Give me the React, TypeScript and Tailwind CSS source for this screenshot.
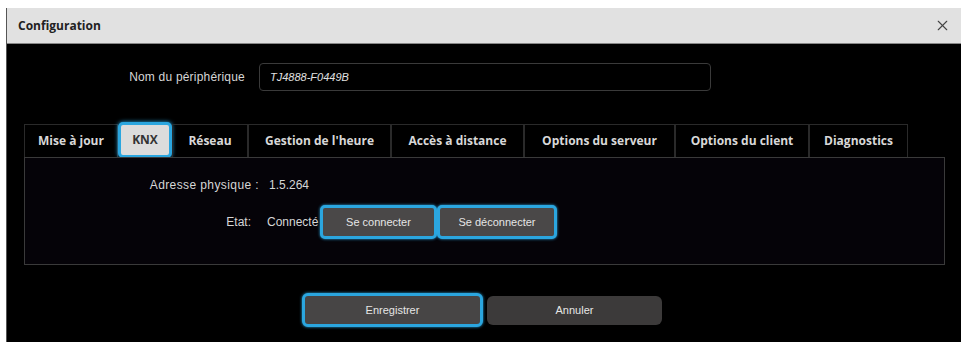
import { X } from "lucide-react";

const tabs = [
  { label: "Mise à jour", w: "w-[94px]" },
  { label: "KNX", w: "w-[54px]", active: true },
  { label: "Réseau", w: "w-[76px]" },
  { label: "Gestion de l'heure", w: "w-[143px]" },
  { label: "Accès à distance", w: "w-[133px]" },
  { label: "Options du serveur", w: "w-[151px]" },
  { label: "Options du client", w: "w-[134px]" },
  { label: "Diagnostics", w: "w-[99px]" },
];

function Tabs() {
  return (
    <div className="flex h-[33px] items-stretch">
      {tabs.map((t) =>
        t.active ? (
          <div
            key={t.label}
            className={`${t.w} -mt-[2px] flex h-[36px] items-center justify-center rounded-[5px] border-[3px] border-[#2ba6df] bg-[#dcdcdc] text-[12px] font-bold text-[#333] shadow-[0_0_4px_#2ba6df]`}
          >
            {t.label}
          </div>
        ) : (
          <div
            key={t.label}
            className={`${t.w} flex items-center justify-center border border-b-0 border-[#2a2a2a] text-[12px] font-bold text-[#d8d8d8]`}
          >
            {t.label}
          </div>
        )
      )}
    </div>
  );
}

function BlueButton({ label, w }: { label: string; w: string }) {
  return (
    <button
      className={`${w} h-[34px] shrink-0 rounded-[5px] border-[3px] border-[#2ba6df] bg-[#4a4848] text-[11px] text-[#e6e6e6] shadow-[0_0_3px_#2ba6df]`}
    >
      {label}
    </button>
  );
}

export default function App() {
  return (
    <div
      className="h-[346px] w-[965px] bg-white pl-[6px] pt-[8px]"
      style={{ fontFamily: '"Liberation Sans", Arial, sans-serif' }}
    >
      <div className="flex h-[334px] w-[955px] flex-col border-l border-[#555] bg-black">
        {/* title bar */}
        <div className="flex h-[36px] items-center justify-between border-b border-[#888] bg-[#e1e1e1] pl-[11px] pr-[10px]">
          <span
            className="text-[12px] font-bold text-[#222]"
            style={{ fontFamily: '"Open Sans", sans-serif' }}
          >
            Configuration
          </span>
          <X className="h-[17px] w-[17px] text-[#444]" strokeWidth={1.6} />
        </div>

        <div className="flex flex-1 flex-col px-[17px]">
          {/* device name */}
          <div className="mt-[19px] flex items-center">
            <div className="w-[222px] pr-[1px] text-right text-[12px] tracking-[0.2px] text-[#d6d6d6]">
              Nom du périphérique
            </div>
            <div className="ml-[13px] flex h-[28px] w-[452px] items-center rounded-[4px] border border-[#3a3a3a] px-[10px] text-[11px] italic text-[#e0e0e0]">
              TJ4888-F0449B
            </div>
          </div>

          {/* tabs */}
          <div
            className="mt-[33px]"
            style={{ fontFamily: '"Open Sans", sans-serif' }}
          >
            <Tabs />
          </div>

          {/* panel */}
          <div className="flex h-[108px] w-[921px] flex-col border border-[#3a3a3a] bg-[#050308] pt-[16px] text-[12px] text-[#d6d6d6]">
            <div className="flex h-[22px] items-center">
              <div className="w-[234px] text-right tracking-[0.4px]">Adresse physique :</div>
              <div className="ml-[10px]">1.5.264</div>
            </div>
            <div className="mt-[9px] flex items-center">
              <div className="w-[226px] text-right">Etat:</div>
              <div className="ml-[16px] w-[53px] overflow-hidden whitespace-nowrap">
                Connecté
              </div>
              <BlueButton label="Se connecter" w="w-[117px]" />
              <BlueButton label="Se déconnecter" w="w-[120px]" />
            </div>
          </div>

          {/* footer */}
          <div className="mt-[28px] flex items-center justify-center gap-[4px] pr-[4px] text-[11px] text-[#e6e6e6]">
            <button className="h-[34px] w-[181px] rounded-[6px] border-[3px] border-[#2ba6df] bg-[#474545] shadow-[0_0_3px_#2ba6df]">
              Enregistrer
            </button>
            <button className="h-[29px] w-[175px] rounded-[6px] bg-[#3c3a3a]">
              Annuler
            </button>
          </div>
        </div>
      </div>
    </div>
  );
}
